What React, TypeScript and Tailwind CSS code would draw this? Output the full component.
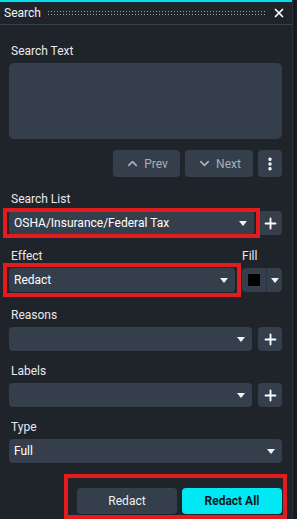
import { ChevronUp, ChevronDown, Plus, X, EllipsisVertical } from "lucide-react";

const Caret = () => (
    <svg width="8" height="5" viewBox="0 0 8 5" className="shrink-0">
        <path d="M0 0 L8 0 L4 5 Z" fill="#f2f4f7" />
    </svg>
);

const Label = ({ text }: { text: string }) => (
    <div className="text-[12px] leading-[16px] text-[#e8eaee] pl-[2px]">{text}</div>
);

const Select = ({ value, className = "" }: { value?: string; className?: string }) => (
    <div className={"h-[24px] rounded-[4px] bg-[#353f4c] flex items-center justify-between pl-[5px] pr-[7px] " + className}>
        <span className="text-[12px] text-white">{value}</span>
        <Caret />
    </div>
);

const PlusBtn = () => (
    <div className="w-[24px] h-[24px] rounded-[4px] bg-[#353f4c] flex items-center justify-center shrink-0">
        <Plus size={17} strokeWidth={2.6} className="text-white" />
    </div>
);

export default function App() {
    return (
        <div className="w-[297px] h-[519px] overflow-hidden bg-[#171a1f] flex" style={{ fontFamily: "Roboto, 'Noto Sans', sans-serif" }}>
            <div className="relative w-[293px] h-full bg-[#1f232a] border-r border-[#2c323b] flex flex-col">
                <div className="h-[2px] bg-[#00dfee]" />
                <div className="h-[22px] flex items-center pl-[4px] pr-[6px]">
                    <span className="text-[12px] text-[#f2f4f7]">Search</span>
                    <div className="flex-1 h-[7px] mx-[6px] bg-[radial-gradient(circle,#9aa0a9_0.7px,transparent_0.9px)] bg-[length:3px_3px]" />
                    <X size={14} strokeWidth={3} className="text-white" />
                </div>
                <div className="h-px bg-[#3a404a]" />

                <div className="flex flex-col pl-[9px] pr-[10px]">
                    <div className="mt-[18px]"><Label text="Search Text" /></div>
                    <div className="mt-[4px] h-[76px] rounded-[5px] bg-[#353f4c]" />

                    <div className="mt-[11px] flex justify-end gap-[5px]">
                        <div className="w-[67px] h-[27px] rounded-[4px] bg-[#353f4c] flex items-center justify-center gap-[4px] text-[12px] text-[#a9b0ba]">
                            <ChevronUp size={15} strokeWidth={2.6} />
                            <span>Prev</span>
                        </div>
                        <div className="w-[68px] h-[27px] rounded-[4px] bg-[#353f4c] flex items-center justify-center gap-[4px] text-[12px] text-[#a9b0ba]">
                            <ChevronDown size={15} strokeWidth={2.6} />
                            <span>Next</span>
                        </div>
                        <div className="w-[24px] h-[27px] rounded-[4px] bg-[#353f4c] flex items-center justify-center">
                            <EllipsisVertical size={16} strokeWidth={3.2} className="text-white" />
                        </div>
                    </div>

                    <div className="mt-[14px]"><Label text="Search List" /></div>
                    <div className="mt-[4px] flex gap-[4px]">
                        <Select value="OSHA/Insurance/Federal Tax" className="flex-1" />
                        <PlusBtn />
                    </div>

                    <div className="mt-[13px] flex">
                        <div className="flex-1"><Label text="Effect" /></div>
                        <div className="w-[40px] text-[12px] leading-[16px] text-[#e8eaee]">Fill</div>
                    </div>
                    <div className="mt-[4px] flex gap-[7px]">
                        <Select value="Redact" className="flex-1" />
                        <div className="w-[40px] h-[24px] rounded-[4px] bg-[#353f4c] flex">
                            <div className="w-[25px] flex items-center justify-center border-r border-[#2a313b]">
                                <div className="w-[12px] h-[12px] bg-black" />
                            </div>
                            <div className="flex-1 flex items-center justify-center">
                                <Caret />
                            </div>
                        </div>
                    </div>

                    <div className="mt-[15px]"><Label text="Reasons" /></div>
                    <div className="mt-[4px] flex gap-[6px]">
                        <Select className="flex-1" />
                        <PlusBtn />
                    </div>

                    <div className="mt-[12px]"><Label text="Labels" /></div>
                    <div className="mt-[4px] flex gap-[6px]">
                        <Select className="flex-1" />
                        <PlusBtn />
                    </div>

                    <div className="mt-[12px]"><Label text="Type" /></div>
                    <div className="mt-[4px]">
                        <Select value="Full" />
                    </div>

                    <div className="mt-[25px] flex justify-end gap-[5px]">
                        <div className="w-[100px] h-[26px] rounded-[4px] bg-[#353f4c] flex items-center justify-center text-[12px] text-[#eef0f3]">Redact</div>
                        <div className="w-[100px] h-[26px] rounded-[4px] bg-[#00e8f4] flex items-center justify-center text-[12px] font-bold text-[#0d1a20]">Redact All</div>
                    </div>
                </div>

                {/* annotation boxes */}
                <div className="absolute left-[3px] top-[208px] w-[257px] h-[30px] border-4 border-[#e11b1e] pointer-events-none" />
                <div className="absolute left-[3px] top-[263px] w-[238px] h-[34px] border-4 border-[#e11b1e] pointer-events-none" />
                <div className="absolute left-[64px] top-[474px] w-[223px] h-[45px] border-4 border-[#e11b1e] pointer-events-none" />
            </div>
        </div>
    );
}
